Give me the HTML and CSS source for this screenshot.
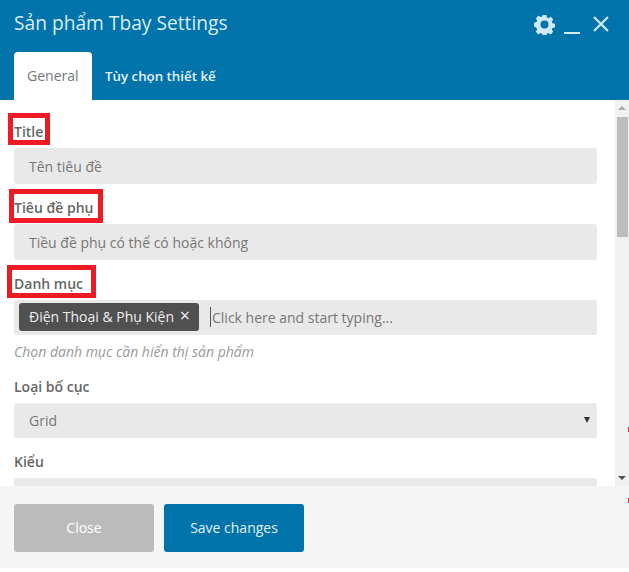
FILE: index.html
```html
<!DOCTYPE html>
<html lang="vi">
<head>
<meta charset="utf-8">
<title>Sản phẩm Tbay Settings</title>
<link rel="stylesheet" href="styles.css">
</head>
<body>
<div class="dialog">
  <header class="head">
    <div class="head-top">
      <h1 class="head-title">Sản phẩm Tbay Settings</h1>
      <div class="head-icons">
        <svg class="ico" width="21" height="21" viewBox="0 0 22 22"><path fill="#cfe9f7" fill-rule="evenodd" d="M9 1h4l.6 2.7 1.500.7 2.400-1.400 2.600 2.800-1.400 2.300.6 1.600 2.700.6v3.800l-2.700.6-.6 1.600 1.400 2.300-2.600 2.800-2.400-1.400-1.500.7-.6 2.600H9l-.6-2.600-1.500-.7-2.400 1.400-2.600-2.800 1.400-2.300-.6-1.600L0 12.900V9.100l2.700-.6.6-1.600-1.400-2.300L4.500 1.800l2.400 1.400 1.500-.7zM11 6.800a4.200 4.200 0 1 0 0 8.400 4.200 4.200 0 0 0 0-8.400z"/></svg>
        <span class="min"></span>
        <svg class="ico close-x" width="18" height="18" viewBox="0 0 18 18"><path stroke="#cfe9f7" stroke-width="2.200" d="M2 2l14 14M16 2L2 16"/></svg>
      </div>
    </div>
    <nav class="tabs">
      <span class="tab tab-active">General</span>
      <span class="tab tab-other">Tùy chọn thiết kế</span>
    </nav>
  </header>
  <div class="middle">
    <main class="content">
      <div class="field field-first">
        <label class="label">Title<i class="mark mark-a"></i></label>
        <div class="input">Tên tiêu đề</div>
      </div>
      <div class="field">
        <label class="label">Tiêu đề phụ<i class="mark mark-b"></i></label>
        <div class="input">Tiều đề phụ có thể có hoặc không</div>
      </div>
      <div class="field">
        <label class="label">Danh mục<i class="mark mark-c"></i></label>
        <div class="input tags">
          <span class="tag">Điện Thoại &amp; Phụ Kiện <span class="tag-x">×</span></span>
          <span class="typing">Click here and start typing...</span>
        </div>
        <p class="hint">Chọn danh mục cần hiển thị sản phẩm</p>
      </div>
      <div class="field field-layout">
        <label class="label">Loại bố cục</label>
        <div class="input select">Grid<span class="arrow"></span></div>
      </div>
      <div class="field field-style">
        <label class="label">Kiểu</label>
        <div class="input select"></div>
      </div>
    </main>
    <div class="scrollbar">
      <span class="sb-up"></span>
      <span class="sb-thumb"></span>
      <span class="sb-down"></span>
    </div>
  </div>
  <footer class="foot">
    <button class="btn btn-close">Close</button>
    <button class="btn btn-save">Save changes</button>
  </footer>
</div>
<i class="tick tick-a"></i>
<i class="tick tick-b"></i>
</body>
</html>
```

FILE: styles.css
```css
* { box-sizing: border-box; }
html, body { margin: 0; padding: 0; background: #fff; }
body {
  position: relative;
  width: 629px;
  height: 572px;
  overflow: hidden;
  font-family: "Open Sans", "Noto Sans", sans-serif;
  font-size: 14px;
  color: #555;
}
.dialog {
  height: 568px;
  display: flex;
  flex-direction: column;
}
.head {
  height: 100px;
  flex: none;
  background: #0073aa;
  padding: 0 14px;
  display: flex;
  flex-direction: column;
}
.head-top {
  height: 52px;
  display: flex;
  justify-content: space-between;
  padding-top: 9px;
}
.head-title {
  margin: 0;
  font-size: 19.2px;
  line-height: 28px;
  font-weight: 400;
  color: #d9edf7;
}
.head-icons {
  display: flex;
  align-items: flex-start;
  margin-right: 5px;
  padding-top: 5px;
}
.min {
  width: 16px;
  height: 2px;
  background: #cfe9f7;
  margin: 18px 0 0 9px;
}
.close-x { margin: 1px 0 0 12px; }
.tabs { display: flex; height: 48px; }
.tab {
  padding: 0 13px;
  line-height: 48px;
  font-size: 14px;
  font-weight: 400;
  color: #e6f3fa;
}
.tab-other { font-size: 13.3px; font-weight: 600; }
.tab-active {
  width: 78px;
  background: #fff;
  border-radius: 4px 4px 0 0;
  color: #777;
}
.middle {
  flex: 1;
  min-height: 0;
  display: flex;
}
.content {
  flex: 1;
  overflow: hidden;
  padding: 0 18px 0 14px;
}
.field { margin-top: 12px; }
.field-first { margin-top: 20px; }
.field-layout { margin-top: 14px; }
.field-style { margin-top: 12px; }
.label {
  position: relative;
  display: block;
  width: fit-content;
  height: 24px;
  margin-bottom: 4px;
  padding-top: 1px;
  font-size: 14px;
  line-height: 22px;
  font-weight: 600;
  color: #666;
}
.mark {
  position: absolute;
  border: 5px solid #ed1c24;
}
.mark-a { left: -6px; top: -7px; width: 42px; height: 32px; }
.mark-b { left: -5px; top: -7px; width: 94px; height: 34px; }
.mark-c { left: -7px; top: -7px; width: 89px; height: 33px; }
.input {
  height: 36px;
  background: #e9e9e9;
  border-radius: 3px;
  padding: 1px 15px 0;
  font-size: 14px;
  line-height: 35px;
  color: #777;
}
.tags {
  display: flex;
  align-items: center;
  height: 35px;
  padding: 0 5px 1px;
}
.tag {
  height: 28px;
  width: 180px;
  flex: none;
  background: #505050;
  color: #eee;
  border-radius: 3px;
  padding: 0 10px;
  line-height: 28px;
  white-space: nowrap;
}
.tag-x { font-size: 18px; line-height: 1; margin-left: 2px; }
.typing {
  margin-left: 11px;
  padding-left: 1px;
  padding-top: 1px;
  border-left: 1px solid #555;
  line-height: 19px;
  color: #777;
}
.hint {
  margin: 8px 0 0;
  font-size: 14px;
  line-height: 18px;
  font-style: italic;
  color: #999;
}
.select { position: relative; height: 35px; line-height: 34px; }
.arrow {
  position: absolute;
  right: 7px;
  top: 14px;
  border: 3.5px solid transparent;
  border-top: 6px solid #333;
  border-bottom: 0;
}
.scrollbar {
  width: 14px;
  flex: none;
  background: #f1f1f1;
  display: flex;
  flex-direction: column;
  align-items: center;
  padding: 6px 0;
}
.sb-up {
  border: 4px solid transparent;
  border-bottom: 4px solid #a8a8a8;
  border-top: 0;
}
.sb-thumb {
  width: 11px;
  height: 120px;
  margin-top: 7px;
  background: #bdbdbd;
}
.sb-down {
  margin-top: auto;
  border: 4px solid transparent;
  border-top: 4px solid #505050;
  border-bottom: 0;
}
.foot {
  height: 82px;
  flex: none;
  background: #f5f5f5;
  padding: 18px 14px;
  display: flex;
  gap: 10px;
}
.btn {
  width: 140px;
  height: 48px;
  border: 0;
  border-radius: 3px;
  font-family: inherit;
  font-size: 14px;
  padding: 0 0 1px;
  color: #e4f1f8;
}
.btn-close { background: #bbb; color: #fff; }
.btn-save { background: #0073aa; }
.tick {
  position: absolute;
  left: 628px;
  width: 1px;
  height: 5px;
  background: #d33;
}
.tick-a { top: 427px; }
.tick-b { top: 498px; }
```
